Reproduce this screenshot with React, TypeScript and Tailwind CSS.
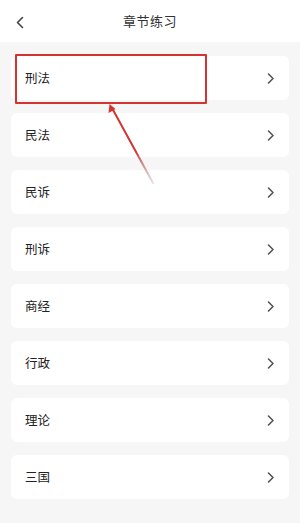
const chapters = ['刑法', '民法', '民诉', '刑诉', '商经', '行政', '理论', '三国'];

function Chevron() {
  return (
    <svg width="8" height="11" viewBox="0 0 8 11" fill="none">
      <path d="M1.5 1 L6 5.5 L1.5 10" stroke="#555" strokeWidth="1.6" strokeLinecap="round" strokeLinejoin="round" />
    </svg>
  );
}

export default function App() {
  return (
    <div
      className="relative w-[300px] h-[523px] bg-[#f6f6f7] overflow-hidden"
      style={{ fontFamily: "'Noto Sans CJK SC', 'Noto Sans', sans-serif" }}
    >
      {/* Header */}
      <div className="relative h-[42px] bg-white flex items-center justify-center">
        <svg className="absolute left-[15px] top-[16px]" width="10" height="13" viewBox="0 0 10 13" fill="none">
          <path d="M7.5 1.5 L2.5 6.5 L7.5 11.5" stroke="#444" strokeWidth="1.6" strokeLinecap="round" strokeLinejoin="round" />
        </svg>
        <span className="text-[13px] text-[#333] tracking-[0.5px]">章节练习</span>
      </div>

      {/* List */}
      <div className="flex flex-col gap-[13px] px-[11px] pt-[14px]">
        {chapters.map((name) => (
          <div key={name} className="h-[44px] bg-white rounded-[6px] flex items-center justify-between pl-[14px] pr-[14px]">
            <span className="text-[12.5px] text-[#222]">{name}</span>
            <Chevron />
          </div>
        ))}
      </div>

      {/* Annotation box */}
      <div className="absolute left-[15px] top-[54px] w-[192px] h-[50px] rounded-[1px] border-2 border-[#d3342f]" />

      {/* Annotation arrow */}
      <svg className="absolute left-0 top-0" width="300" height="523" viewBox="0 0 300 523" fill="none">
        <defs>
          <linearGradient id="arr" x1="110" y1="105" x2="153" y2="183" gradientUnits="userSpaceOnUse">
            <stop offset="0" stopColor="#d8322e" />
            <stop offset="0.6" stopColor="#c83a36" />
            <stop offset="1" stopColor="#b8a8a8" stopOpacity="0.35" />
          </linearGradient>
        </defs>
        <path d="M112 108 L153 183" stroke="url(#arr)" strokeWidth="2" strokeLinecap="round" />
        <path d="M109.5 104 L108.5 113 L115.5 109 Z" fill="#d8322e" />
      </svg>
    </div>
  );
}
